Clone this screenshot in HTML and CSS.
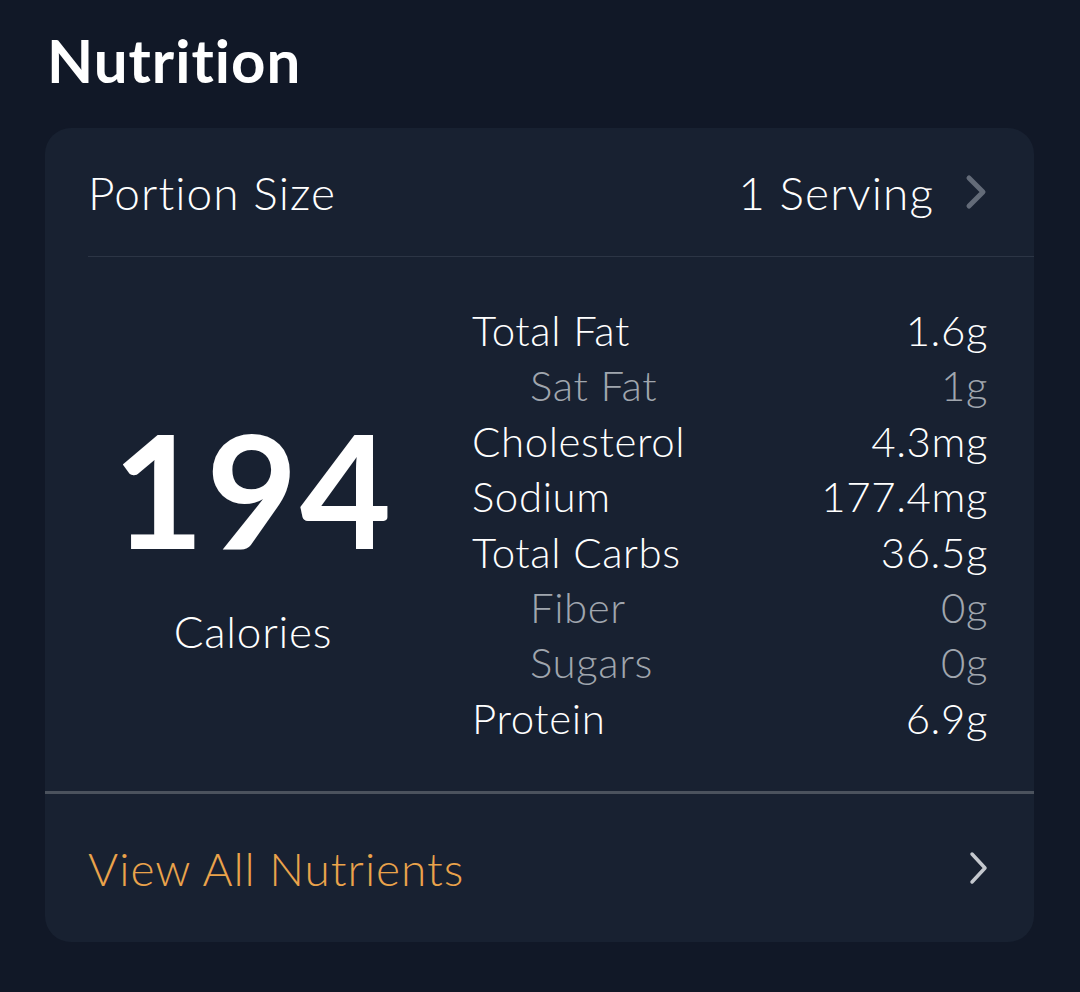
FILE: index.html
```html
<!DOCTYPE html>
<html lang="en">
<head>
    <meta charset="UTF-8">
    <meta name="viewport" content="width=device-width, initial-scale=1.0">
    <title>Nutrition</title>
    <link rel="stylesheet" href="styles.css">
</head>
<body>
    <div class="page">
        <!-- Titulo -->
        <h1 class="title">Nutrition</h1>

        <div class="card">
            <!-- Porcion -->
            <div class="portion">
                <span class="portion-label">Portion Size</span>
                <span class="portion-value">1 Serving
                    <svg class="chev chev-dim" viewBox="0 0 24 36" width="24" height="36">
                        <path d="M5 4 L19 18 L5 32" fill="none" stroke="currentColor" stroke-width="5" stroke-linecap="round" stroke-linejoin="round"/>
                    </svg>
                </span>
            </div>

            <!-- Resumen -->
            <div class="summary">
                <div class="calories">
                    <div class="cal-num">194</div>
                    <div class="cal-label">Calories</div>
                </div>
                <div class="facts">
                    <div class="row"><span>Total Fat</span><span>1.6g</span></div>
                    <div class="row sub"><span>Sat Fat</span><span>1g</span></div>
                    <div class="row"><span>Cholesterol</span><span>4.3mg</span></div>
                    <div class="row"><span>Sodium</span><span>177.4mg</span></div>
                    <div class="row"><span>Total Carbs</span><span>36.5g</span></div>
                    <div class="row sub"><span>Fiber</span><span>0g</span></div>
                    <div class="row sub"><span>Sugars</span><span>0g</span></div>
                    <div class="row"><span>Protein</span><span>6.9g</span></div>
                </div>
            </div>

            <!-- Ver todo -->
            <div class="view-all">
                <span>View All Nutrients</span>
                <svg class="chev chev-light" viewBox="0 0 24 36" width="24" height="36">
                    <path d="M6 4 L19 18 L6 32" fill="none" stroke="currentColor" stroke-width="3.5" stroke-linecap="round" stroke-linejoin="round"/>
                </svg>
            </div>
        </div>
    </div>
</body>
</html>
```

FILE: styles.css
```css
/* Estilos generales */
body {
    margin: 0;
    padding: 0;
    background-color: #111827;
    color: #fff;
    font-family: 'Lato', 'Noto Sans', sans-serif;
}

.page {
    padding: 24px 46px 50px 45px;
}

.title {
    margin: 0 0 32px 2px;
    font-size: 60px;
    font-weight: 700;
    line-height: 72px;
    letter-spacing: 1px;
}

/* Tarjeta */
.card {
    background: #182131;
    border-radius: 26px;
    overflow: hidden;
}

.portion {
    display: flex;
    justify-content: space-between;
    align-items: center;
    height: 128px;
    margin-left: 43px;
    padding-right: 46px;
    border-bottom: 1px solid #2c3545;
    font-size: 46px;
    font-weight: 300;
    letter-spacing: 1.1px;
}

.portion-value {
    display: flex;
    align-items: center;
    gap: 30px;
}

.chev-dim {
    color: #636b78;
}

.chev-light {
    color: #c4c8ce;
}

/* Resumen de calorias */
.summary {
    display: grid;
    grid-template-columns: 416px 1fr;
    padding: 46px 46px 45px 0;
    border-bottom: 3px solid #4b525d;
}

.calories {
    display: flex;
    flex-direction: column;
    align-items: center;
    justify-content: center;
    padding-top: 20px;
}

.cal-num {
    font-size: 158px;
    font-weight: 700;
    line-height: 150px;
    letter-spacing: 2px;
}

.cal-label {
    margin-top: 42px;
    font-size: 44px;
    font-weight: 300;
    letter-spacing: 0.8px;
}

.facts {
    padding-left: 11px;
}

.row {
    display: flex;
    justify-content: space-between;
    font-size: 42px;
    font-weight: 300;
    line-height: 55.4px;
    letter-spacing: 0.6px;
}

.row.sub {
    padding-left: 58px;
    color: #a0a6ae;
}

/* Ver todos */
.view-all {
    display: flex;
    justify-content: space-between;
    align-items: center;
    height: 148px;
    padding: 0 44px 0 43px;
    color: #eaa34b;
    font-size: 46px;
    font-weight: 300;
    letter-spacing: 1px;
}
```
